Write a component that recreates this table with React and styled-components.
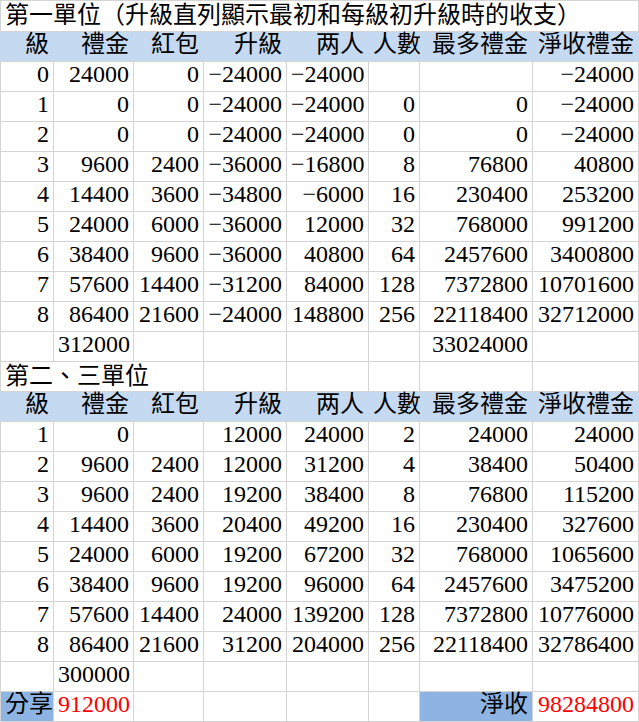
import React from "react";
import styled, { createGlobalStyle } from "styled-components";

const GlobalStyle = createGlobalStyle`
  body {
    margin: 0;
    background: #fff;
  }
`;

const GRID = "#d4d4d4";
const FILLS = {
  header: "#c5d9f1",
  accent: "#8db4e2",
};

const Sheet = styled.div`
  width: 639px;
  border-top: 1px solid ${GRID};
  font-family: "Liberation Serif", "Noto Sans CJK TC", serif;
  font-size: 24px;
  color: #000;
`;

const Row = styled.div`
  display: grid;
  grid-template-columns: 54px 80px 70px 83px 82px 51px 113px 106px;
  height: ${p => (p.$tall ? 31 : 30)}px;
`;

const Cell = styled.div`
  box-sizing: border-box;
  grid-column: span ${p => p.$span || 1};
  padding: ${p => (p.$span > 1 ? "2px" : "0")} 4px 0;
  line-height: 25px;
  white-space: nowrap;
  overflow: visible;
  text-align: ${p => (p.$left ? "left" : "right")};
  color: ${p => (p.$red ? "#ff0000" : "inherit")};
  background: ${p => FILLS[p.$fill] || "transparent"};
  border-bottom: 1px solid ${GRID};
  border-right: 1px solid ${p => (p.$fill === "header" ? FILLS.header : GRID)};

  &:first-child {
    border-left: 1px solid ${p => (p.$fill === "header" ? FILLS.header : GRID)};
  }
`;

const HEADINGS = ["級", "禮金", "紅包", "升級", "两人", "人數", "最多禮金", "淨收禮金"];

const FIRST_UNIT = [
  ["0", "24000", "0", "−24000", "−24000", "", "", "−24000"],
  ["1", "0", "0", "−24000", "−24000", "0", "0", "−24000"],
  ["2", "0", "0", "−24000", "−24000", "0", "0", "−24000"],
  ["3", "9600", "2400", "−36000", "−16800", "8", "76800", "40800"],
  ["4", "14400", "3600", "−34800", "−6000", "16", "230400", "253200"],
  ["5", "24000", "6000", "−36000", "12000", "32", "768000", "991200"],
  ["6", "38400", "9600", "−36000", "40800", "64", "2457600", "3400800"],
  ["7", "57600", "14400", "−31200", "84000", "128", "7372800", "10701600"],
  ["8", "86400", "21600", "−24000", "148800", "256", "22118400", "32712000"],
  ["", "312000", "", "", "", "", "33024000", ""],
];

const OTHER_UNITS = [
  ["1", "0", "", "12000", "24000", "2", "24000", "24000"],
  ["2", "9600", "2400", "12000", "31200", "4", "38400", "50400"],
  ["3", "9600", "2400", "19200", "38400", "8", "76800", "115200"],
  ["4", "14400", "3600", "20400", "49200", "16", "230400", "327600"],
  ["5", "24000", "6000", "19200", "67200", "32", "768000", "1065600"],
  ["6", "38400", "9600", "19200", "96000", "64", "2457600", "3475200"],
  ["7", "57600", "14400", "24000", "139200", "128", "7372800", "10776000"],
  ["8", "86400", "21600", "31200", "204000", "256", "22118400", "32786400"],
  ["", "300000", "", "", "", "", "", ""],
];

const HeaderRow = () => (
  <Row>
    {HEADINGS.map(h => (
      <Cell key={h} $fill="header">
        {h}
      </Cell>
    ))}
  </Row>
);

const DataRows = ({ rows }) =>
  rows.map((row, i) => (
    <Row key={i}>
      {row.map((value, j) => (
        <Cell key={j}>{value}</Cell>
      ))}
    </Row>
  ));

export default function App() {
  return (
    <>
      <GlobalStyle />
      <Sheet>
        <Row $tall>
          <Cell $span={8} $left>
            第一單位（升級直列顯示最初和每級初升級時的收支）
          </Cell>
        </Row>
        <HeaderRow />
        <DataRows rows={FIRST_UNIT} />

        <Row>
          <Cell $span={3} $left>
            第二、三單位
          </Cell>
          <Cell />
          <Cell />
          <Cell />
          <Cell />
          <Cell />
        </Row>
        <HeaderRow />
        <DataRows rows={OTHER_UNITS} />

        <Row>
          <Cell $fill="accent">分享</Cell>
          <Cell $red>912000</Cell>
          <Cell />
          <Cell />
          <Cell />
          <Cell />
          <Cell $fill="accent">淨收</Cell>
          <Cell $red>98284800</Cell>
        </Row>
      </Sheet>
    </>
  );
}
